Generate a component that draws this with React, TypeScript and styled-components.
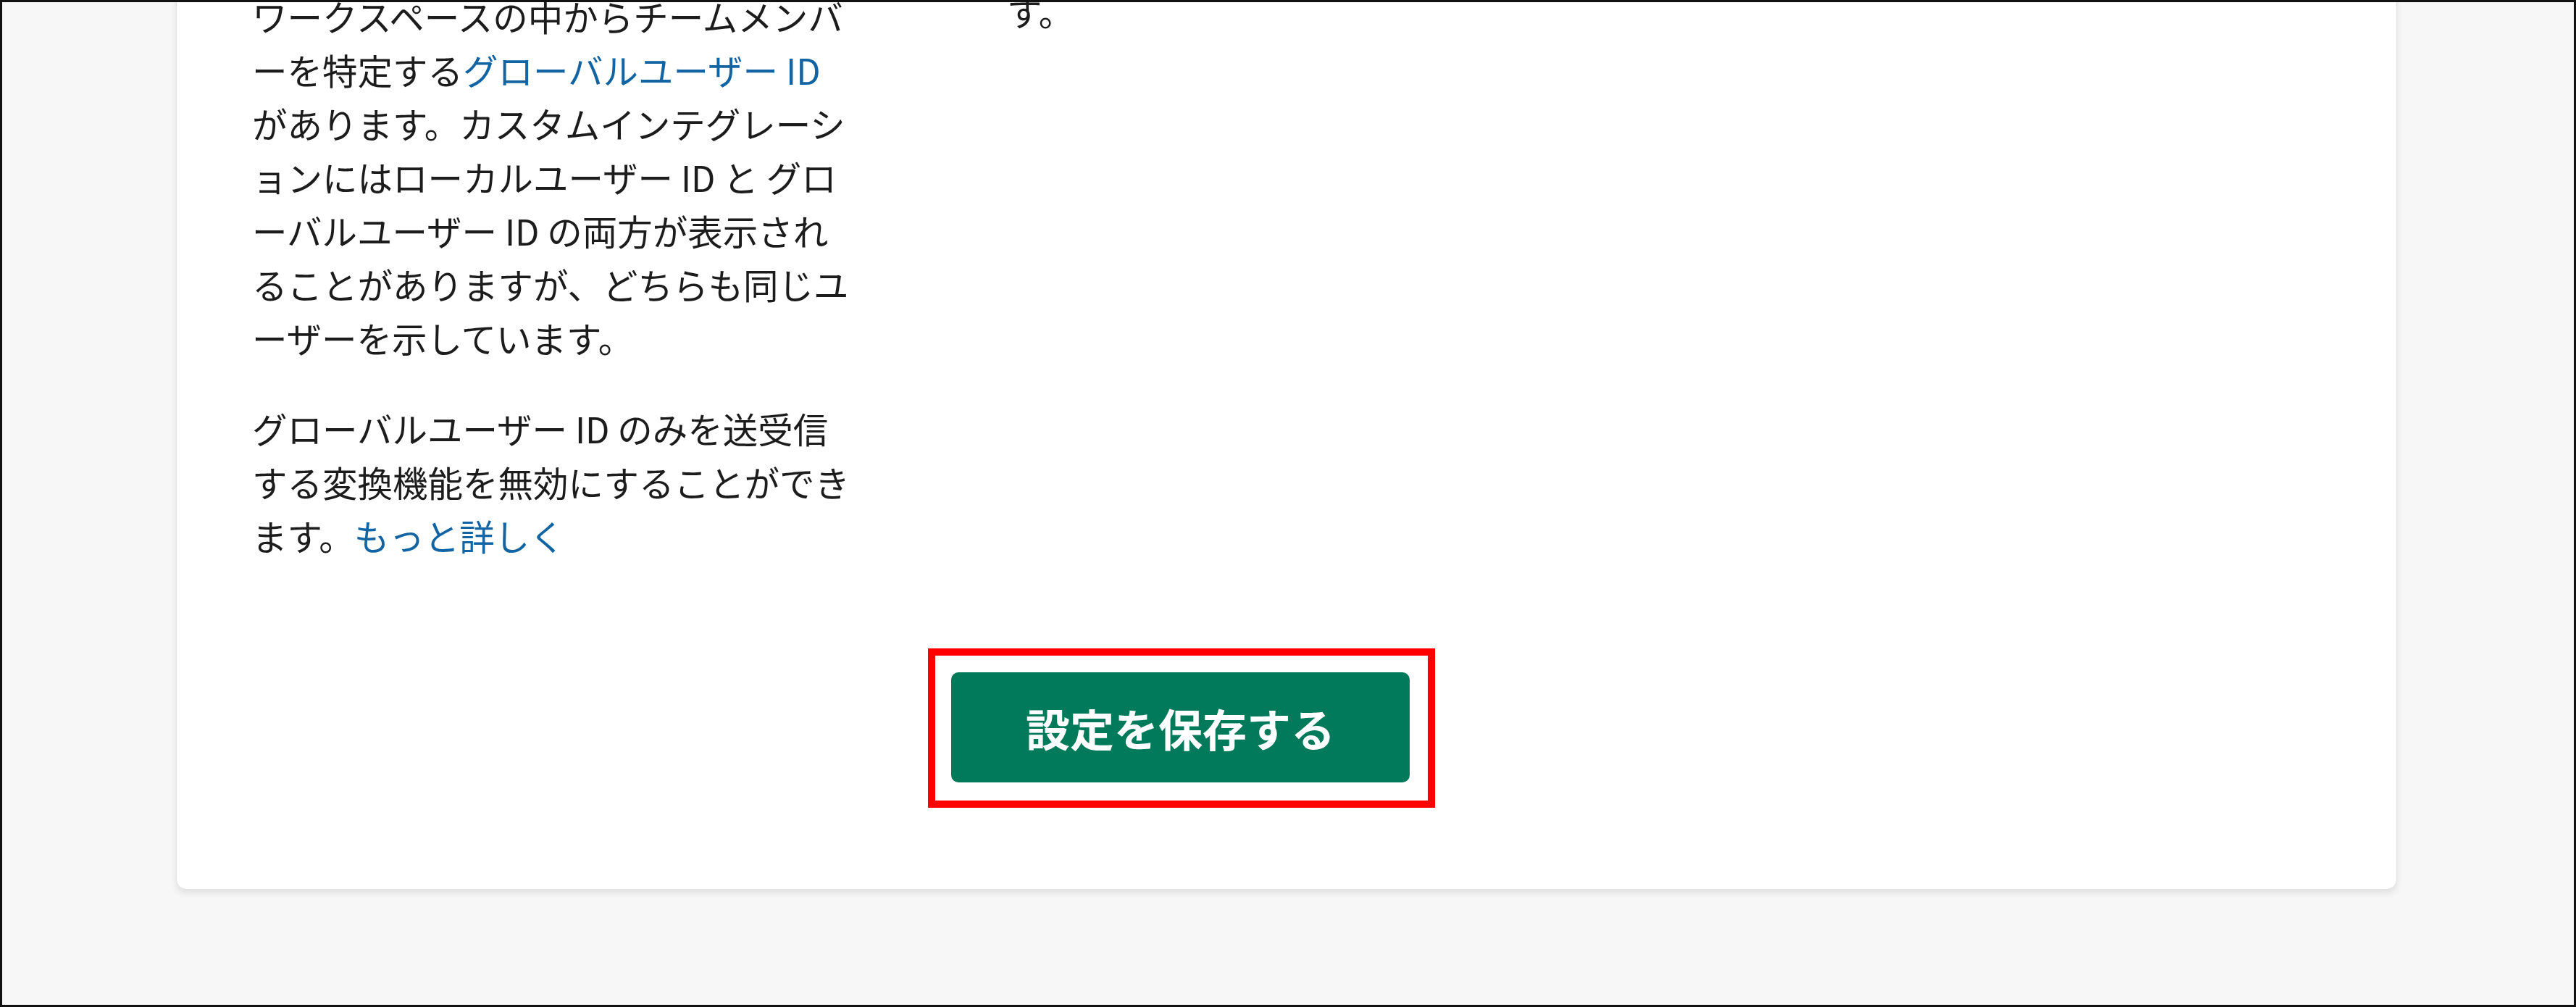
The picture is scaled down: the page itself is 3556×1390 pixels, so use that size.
import React from 'react'
import styled, { createGlobalStyle } from 'styled-components'

const GlobalStyle = createGlobalStyle`
  html, body {
    margin: 0;
    padding: 0;
    background: #f7f7f7;
  }
  body {
    font-family: "Noto Sans CJK JP", "Noto Sans", sans-serif;
    color: #1d1c1d;
  }
`

const Frame = styled.div`
  box-sizing: border-box;
  width: 3556px;
  height: 1390px;
  border: 3px solid #111;
  background: #f7f7f7;
  overflow: hidden;
`

// the page is scrolled, the top of the card sits above the viewport
const Scrolled = styled.div`
  margin-top: -200px;
`

const Card = styled.section`
  box-sizing: border-box;
  width: 3066px;
  margin-left: 240px;
  padding: 181px 0 112px 104px;
  background: #fff;
  border: 1px solid #e2e2e2;
  border-radius: 14px;
  box-shadow: 0 5px 9px rgba(0, 0, 0, 0.09);
`

const Columns = styled.div`
  display: grid;
  grid-template-columns: 960px 1fr;
  column-gap: 82px;
`

const Column = styled.div<{ $shift?: number }>`
  font-size: 48.5px;
  line-height: 74px;
  margin-top: ${(p) => p.$shift ?? 0}px;
`

const Para = styled.p`
  margin: 0;
  & + & {
    margin-top: 51px;
  }
`

const TextLink = styled.a`
  color: #1264a3;
  text-decoration: none;
`

const Footer = styled.div`
  display: flex;
  padding-left: 933px;
  margin-top: 119px;
`

const Highlight = styled.div`
  border: 10px solid #ff0000;
  padding: 23px 25px 25px 22px;
`

const SaveButton = styled.button`
  box-sizing: border-box;
  width: 633px;
  height: 152px;
  border: none;
  border-radius: 10px;
  background: #007a5a;
  color: #fff;
  font-family: "Noto Sans CJK JP", "Noto Sans", sans-serif;
  font-size: 61px;
  font-weight: 700;
  cursor: pointer;
`

const App = () => {
  return (
    <>
      <GlobalStyle />
      <Frame>
        <Scrolled>
          <Card>
            <Columns>
              <Column>
                <Para>
                  ワークスペースの中からチームメンバ<br />
                  ーを特定する<TextLink href="#">グローバルユーザー ID</TextLink><br />
                  があります。カスタムインテグレーシ<br />
                  ョンにはローカルユーザー ID と グロ<br />
                  ーバルユーザー ID の両方が表示され<br />
                  ることがありますが、どちらも同じユ<br />
                  ーザーを示しています。
                </Para>
                <Para>
                  グローバルユーザー ID のみを送受信<br />
                  する変換機能を無効にすることができ<br />
                  ます。<TextLink href="#">もっと詳しく</TextLink>
                </Para>
              </Column>
              <Column $shift={-7}>
                <Para>す。</Para>
              </Column>
            </Columns>
            <Footer>
              <Highlight>
                <SaveButton>設定を保存する</SaveButton>
              </Highlight>
            </Footer>
          </Card>
        </Scrolled>
      </Frame>
    </>
  )
}

export default App
